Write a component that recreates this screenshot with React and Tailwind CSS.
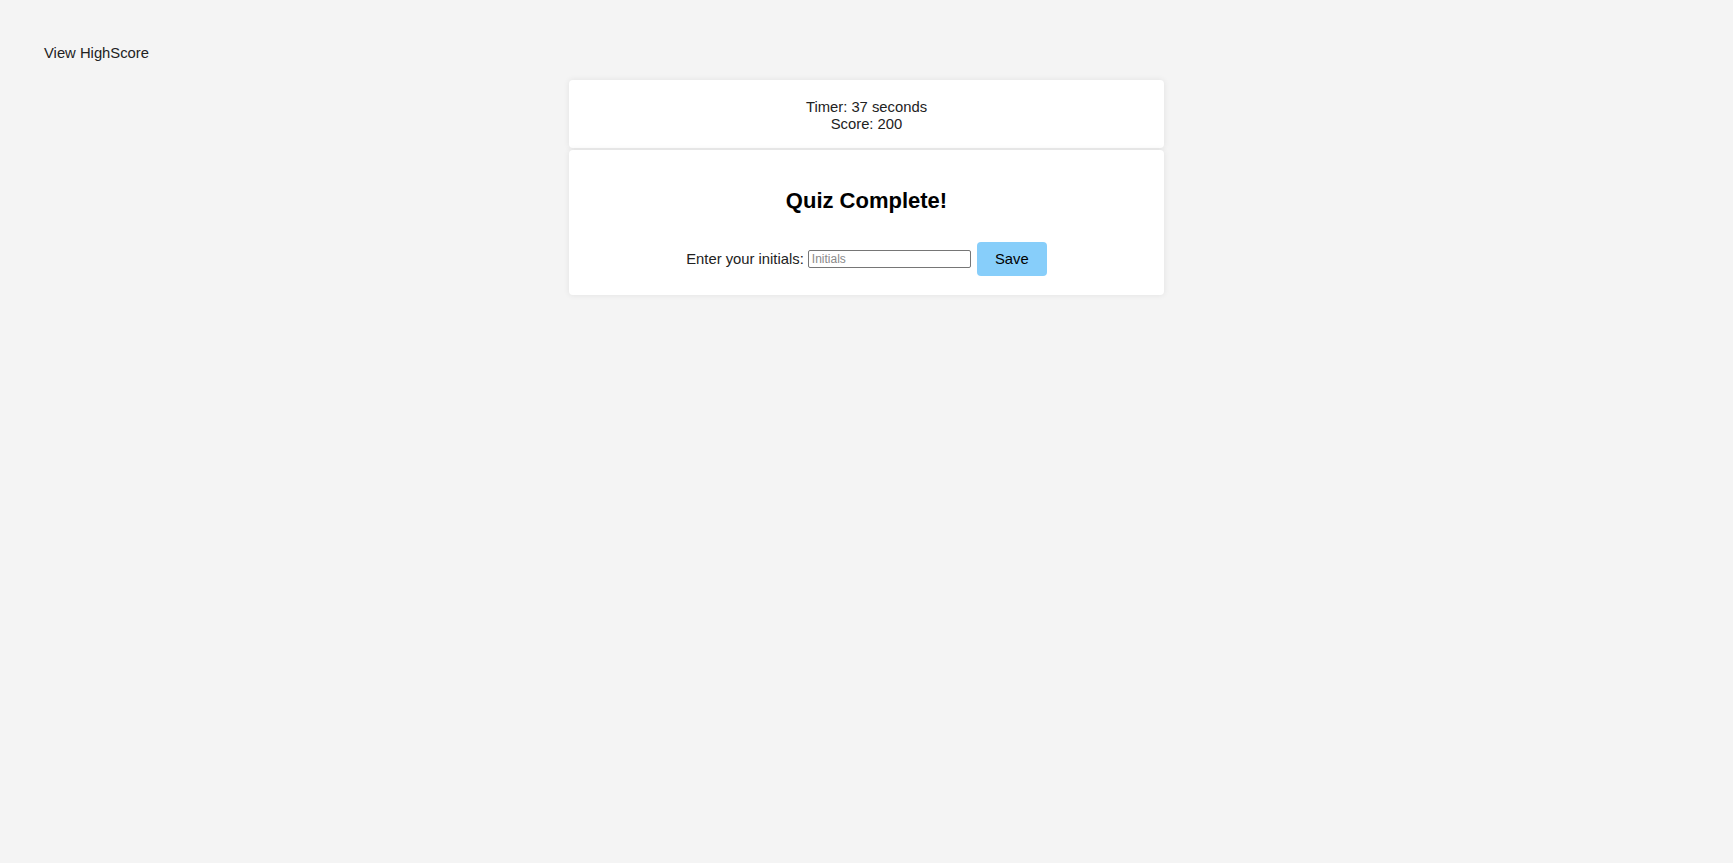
export default function App() {
  return (
    <div className="min-h-screen w-full bg-[#f4f4f4] text-[#222] font-['Liberation_Sans',Arial,sans-serif] text-[14.8px]">
      <header className="px-[44px] pt-[42px] pb-[16px]">
        <a href="#" className="text-[#222] leading-[17px]">View HighScore</a>
      </header>
      <main className="flex flex-col items-center gap-[2px]">
        <section className="w-[595px] bg-white rounded-[4px] shadow-[0_0_6px_rgba(0,0,0,0.08)] pt-[19px] pb-[15px] text-center leading-[17px]">
          <div>Timer: 37 seconds</div>
          <div>Score: 200</div>
        </section>
        <section className="w-[595px] bg-white rounded-[4px] shadow-[0_0_6px_rgba(0,0,0,0.08)] pt-[38px] pb-[19px] flex flex-col items-center">
          <h2 className="text-[22px] font-bold leading-[25px] text-black">Quiz Complete!</h2>
          <div className="mt-[29px] flex items-center gap-[4px]">
            <label className="leading-[17px]">Enter your initials:</label>
            <input
              type="text"
              placeholder="Initials"
              className="w-[163px] h-[18px] border border-[#767676] rounded-[2px] px-[3px] text-[12px] placeholder:text-[#8a8a8a] bg-white outline-none"
            />
            <button className="ml-[2px] w-[70px] h-[34px] rounded-[4px] bg-[#87cefa] text-black text-[14.8px]">Save</button>
          </div>
        </section>
      </main>
    </div>
  );
}
